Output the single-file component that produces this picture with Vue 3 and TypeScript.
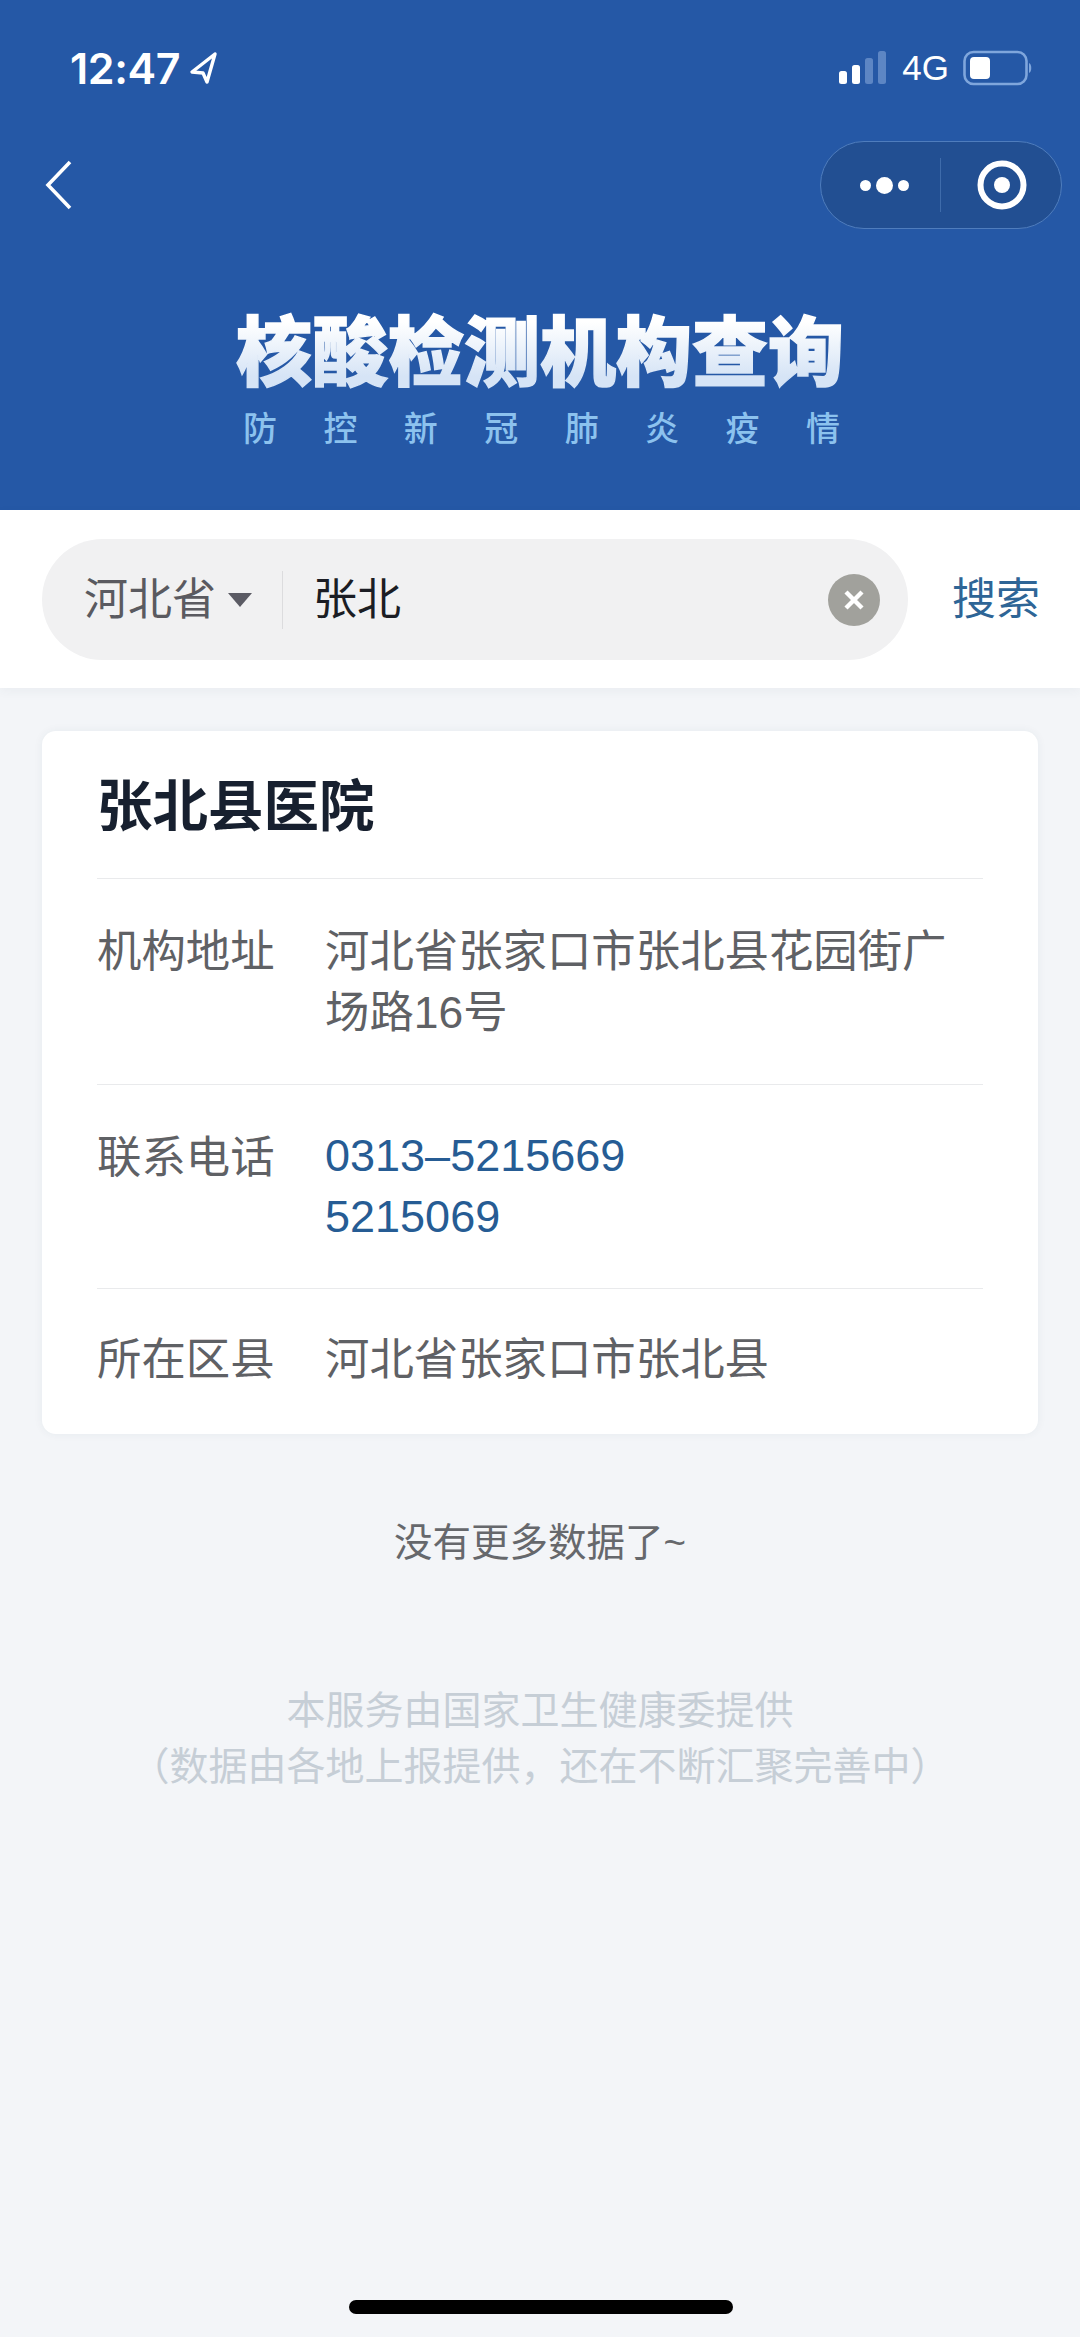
<script setup lang="ts">
interface Row { label: string; lines: string[]; link?: boolean }
const rows: Row[] = [
  { label: '机构地址', lines: ['河北省张家口市张北县花园街广', '场路16号'] },
  { label: '联系电话', lines: ['0313–5215669', '5215069'], link: true },
  { label: '所在区县', lines: ['河北省张家口市张北县'] },
]
const slogan = ['防', '控', '新', '冠', '肺', '炎', '疫', '情']
</script>

<template>
  <div class="page">
    <header class="head">
      <div class="status">
        <div class="time">
          <span>12:47</span>
          <svg width="30" height="34" viewBox="0 0 30 34"><path d="M27 3 4 21l11 1 4 9z" fill="none" stroke="#fff" stroke-width="3.4" stroke-linejoin="round"/></svg>
        </div>
        <div class="sys">
          <svg class="bars" width="48" height="34" viewBox="0 0 48 34">
            <rect x="0" y="20" width="8" height="13" rx="2.5" fill="#fff"/>
            <rect x="13" y="14" width="8" height="19" rx="2.5" fill="#fff"/>
            <rect x="26" y="7" width="8" height="26" rx="2.5" fill="#5d86c4"/>
            <rect x="39" y="0" width="8" height="33" rx="2.5" fill="#5d86c4"/>
          </svg>
          <span class="net">4G</span>
          <svg width="70" height="36" viewBox="0 0 70 36">
            <rect x="1.5" y="2" width="62" height="32" rx="9" fill="none" stroke="#7fa6dc" stroke-width="2.6"/>
            <rect x="7" y="7" width="20" height="22" rx="4" fill="#fff"/>
            <path d="M66 13c3 1 3 9 0 10z" fill="#7fa6dc"/>
          </svg>
        </div>
      </div>
      <div class="nav">
        <svg class="back" width="30" height="50" viewBox="0 0 30 50"><path d="M26 2 4 25l22 23" fill="none" stroke="#fff" stroke-width="3.6"/></svg>
        <div class="capsule">
          <div class="dots"><i></i><b></b><i></i></div>
          <span class="sep"></span>
          <svg width="50" height="50" viewBox="0 0 50 50"><circle cx="25" cy="25" r="21.5" fill="none" stroke="#fff" stroke-width="6"/><circle cx="25" cy="25" r="8" fill="#fff"/></svg>
        </div>
      </div>
      <h1 class="title">核酸检测机构查询</h1>
      <div class="slogan"><span v-for="c in slogan" :key="c">{{ c }}</span></div>
    </header>

    <section class="search">
      <div class="pill">
        <span class="prov">河北省</span>
        <span class="caret"></span>
        <span class="vsep"></span>
        <span class="query">张北</span>
        <span class="clear">
          <svg width="26" height="26" viewBox="0 0 26 26"><path d="M5 5l16 16M21 5 5 21" stroke="#fff" stroke-width="4.4"/></svg>
        </span>
      </div>
      <span class="go">搜索</span>
    </section>

    <main class="body">
      <article class="card">
        <h2 class="name">张北县医院</h2>
        <div v-for="r in rows" :key="r.label" class="row">
          <span class="label">{{ r.label }}</span>
          <div class="value" :class="{ link: r.link }">
            <div v-for="l in r.lines" :key="l">{{ l }}</div>
          </div>
        </div>
      </article>
      <p class="more">没有更多数据了~</p>
      <p class="note">本服务由国家卫生健康委提供<br />（数据由各地上报提供，还在不断汇聚完善中）</p>
    </main>
    <div class="home"></div>
  </div>
</template>

<style>
html, body { margin: 0; background: #f3f5f8; }
</style>

<style scoped>
.page {
  position: relative;
  width: 1080px;
  height: 2337px;
  overflow: hidden;
  background: #f3f5f8;
  font-family: "Liberation Sans", "Noto Sans CJK SC", sans-serif;
}
.head {
  height: 510px;
  background: #2558a6;
  box-sizing: border-box;
  padding-top: 44px;
  color: #fff;
  display: flex;
  flex-direction: column;
}
.status {
  height: 48px;
  display: flex;
  justify-content: space-between;
  align-items: center;
  padding: 0 47px 0 70px;
}
.time {
  display: flex;
  align-items: center;
  gap: 8px;
  font: 600 43px/48px Inter, "Liberation Sans", sans-serif;
  letter-spacing: -0.4px;
}
.sys { display: flex; align-items: center; gap: 13px; }
.bars { margin-right: 2px; }
.net { font: 500 35px/36px "Liberation Sans", sans-serif; margin-right: 1px; }
.nav {
  margin-top: 49px;
  height: 88px;
  display: flex;
  align-items: center;
  justify-content: space-between;
  padding: 0 18px 0 44px;
}
.capsule {
  width: 242px;
  height: 88px;
  box-sizing: border-box;
  border: 1.5px solid #4f7dbd;
  border-radius: 44px;
  background: #224f92;
  display: flex;
  align-items: center;
}
.dots { width: 119px; display: flex; justify-content: flex-end; align-items: center; gap: 5px; padding-right: 31px; box-sizing: border-box; }
.dots i { width: 11px; height: 11px; border-radius: 50%; background: #fff; }
.dots b { width: 17px; height: 17px; border-radius: 50%; background: #fff; }
.sep { width: 1px; height: 54px; background: #3f6cab; }
.capsule svg { margin-left: 36px; }
.title {
  margin: 76px 0 0;
  text-align: center;
  font-family: "Noto Sans CJK SC", sans-serif;
  font-size: 76px;
  line-height: 84px;
  font-weight: 900;
  letter-spacing: 0;
  background: linear-gradient(180deg, #ffffff 20%, #d6e4f6 85%);
  -webkit-background-clip: text;
  background-clip: text;
  -webkit-text-fill-color: transparent;
  -webkit-text-stroke: 1.5px transparent;
  padding: 0 158px;
}
.slogan {
  margin-top: 16px;
  padding: 0 240px 0 243px;
  display: flex;
  justify-content: space-between;
  font-family: "Noto Sans CJK SC", sans-serif;
  font-size: 34px;
  font-weight: 500;
  line-height: 44px;
  color: #8cc2ee;
}
.search {
  position: relative;
  height: 178px;
  background: #fff;
  box-sizing: border-box;
  padding: 29px 42px 0;
  display: flex;
  align-items: flex-start;
  box-shadow: 0 3px 10px rgba(60, 70, 90, 0.05);
}
.pill {
  flex: none;
  width: 866px;
  height: 121px;
  border-radius: 61px;
  background: #f1f1f2;
  display: flex;
  align-items: center;
  box-sizing: border-box;
  padding: 0 28px 0 42px;
}
.prov { font-size: 44px; line-height: 60px; color: #5a5a60; }
.caret {
  margin-left: 12px;
  width: 0;
  height: 0;
  border-left: 12px solid transparent;
  border-right: 12px solid transparent;
  border-top: 14px solid #5b5b64;
}
.vsep { width: 1px; height: 58px; background: #dcdcde; margin: 0 30px 0 30px; }
.query { flex: 1; font-size: 44px; line-height: 60px; color: #1b1d24; }
.clear {
  width: 52px;
  height: 52px;
  border-radius: 50%;
  background: #a1a19c;
  display: flex;
  align-items: center;
  justify-content: center;
}
.go { flex: none; margin-left: 44px; line-height: 121px; font-size: 44px; color: #2e6596; white-space: nowrap; }
.body { padding: 43px 42px 0; }
.card {
  background: #fff;
  border-radius: 14px;
  box-shadow: 0 0 10px rgba(40, 60, 90, 0.06);
  padding: 0 55px;
  height: 703px;
  box-sizing: border-box;
}
.name {
  margin: 0;
  height: 147px;
  line-height: 153px;
  font-size: 55.5px;
  font-weight: 700;
  color: #17202f;
}
.row {
  display: flex;
  border-top: 1px solid #e9eaec;
  padding: 42px 0 41px;
  font-size: 44.4px;
  line-height: 61px;
}
.row:last-child { padding-bottom: 0; padding-top: 40px; }
.label { width: 228px; flex: none; color: #5f6165; }
.value { color: #5f6165; }
.value.link { color: #265c94; font-size: 45px; margin-top: -2px; }
.more {
  margin: 79px 0 0;
  text-align: center;
  font-size: 38.5px;
  line-height: 60px;
  color: #66686c;
}
.note {
  margin: 110px 0 0;
  text-align: center;
  font-size: 39px;
  line-height: 56px;
  color: #c6ced6;
}
.home {
  position: absolute;
  left: 349px;
  bottom: 23px;
  width: 384px;
  height: 14px;
  border-radius: 7px;
  background: #000;
}
</style>
